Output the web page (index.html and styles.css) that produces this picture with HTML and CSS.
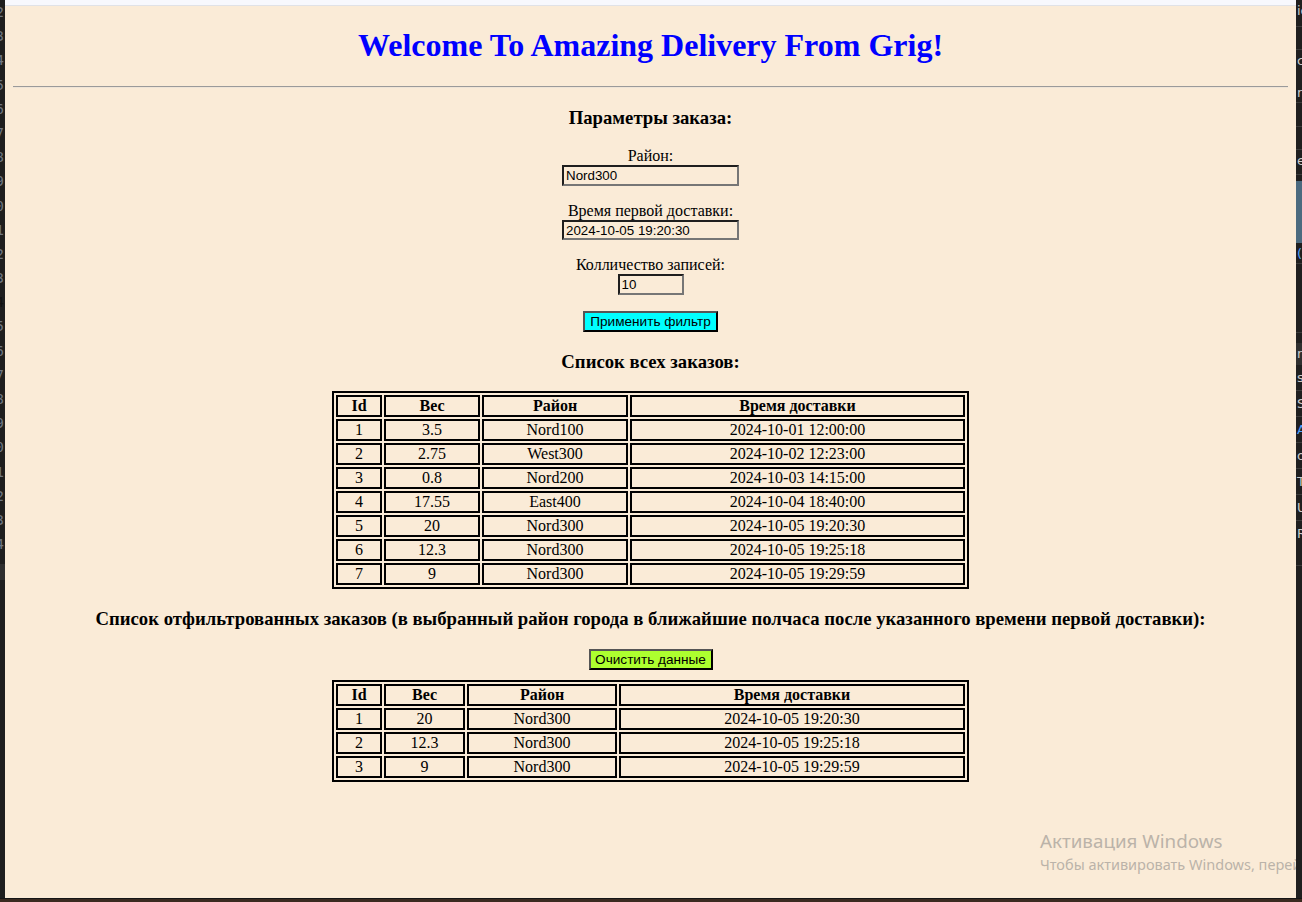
FILE: index.html
```html
<!DOCTYPE html>
<html lang="ru">
<head>
<meta charset="utf-8">
<title>Amazing Delivery</title>
<link rel="stylesheet" href="styles.css">
</head>
<body>
<div class="screen">
  <div class="gutter-left">
    <div class="ln">12</div><div class="ln">13</div><div class="ln">14</div><div class="ln">15</div>
    <div class="ln">16</div><div class="ln">17</div><div class="ln">18</div><div class="ln">19</div>
    <div class="ln">20</div><div class="ln">21</div><div class="ln">22</div><div class="ln">23</div>
    <div class="ln ln-current">24</div><div class="ln">25</div><div class="ln">26</div><div class="ln">27</div>
    <div class="ln">28</div><div class="ln">29</div><div class="ln">30</div><div class="ln">31</div>
    <div class="ln">32</div><div class="ln">33</div><div class="ln">34</div>
    <div class="gutter-bar"></div>
  </div>

  <div class="window">
    <div class="topbar"></div>
    <div class="viewport">
      <div class="page">
        <h1 class="title">Welcome To Amazing Delivery From Grig!</h1>
        <hr class="rule">
        <h3 class="section">Параметры заказа:</h3>
        <form class="filters">
          <div class="field">
            <label class="field-label" for="district">Район:</label>
            <input class="input input-wide" id="district" type="text" value="Nord300">
          </div>
          <div class="field">
            <label class="field-label" for="first-time">Время первой доставки:</label>
            <input class="input input-wide" id="first-time" type="text" value="2024-10-05 19:20:30">
          </div>
          <div class="field">
            <label class="field-label" for="count">Колличество записей:</label>
            <input class="input input-short" id="count" type="text" value="10">
          </div>
          <button class="btn btn-apply" type="button">Применить фильтр</button>
        </form>

        <h3 class="section">Список всех заказов:</h3>
        <table class="orders">
          <thead>
            <tr><th class="c-id">Id</th><th class="c-w1">Вес</th><th class="c-d1">Район</th><th class="c-t1">Время доставки</th></tr>
          </thead>
          <tbody>
            <tr><td>1</td><td>3.5</td><td>Nord100</td><td>2024-10-01 12:00:00</td></tr>
            <tr><td>2</td><td>2.75</td><td>West300</td><td>2024-10-02 12:23:00</td></tr>
            <tr><td>3</td><td>0.8</td><td>Nord200</td><td>2024-10-03 14:15:00</td></tr>
            <tr><td>4</td><td>17.55</td><td>East400</td><td>2024-10-04 18:40:00</td></tr>
            <tr><td>5</td><td>20</td><td>Nord300</td><td>2024-10-05 19:20:30</td></tr>
            <tr><td>6</td><td>12.3</td><td>Nord300</td><td>2024-10-05 19:25:18</td></tr>
            <tr><td>7</td><td>9</td><td>Nord300</td><td>2024-10-05 19:29:59</td></tr>
          </tbody>
        </table>

        <h3 class="section">Список отфильтрованных заказов (в выбранный район города в ближайшие полчаса после указанного времени первой доставки):</h3>
        <button class="btn btn-clear" type="button">Очистить данные</button>
        <table class="orders">
          <thead>
            <tr><th class="c-id">Id</th><th class="c-w2">Вес</th><th class="c-d2">Район</th><th class="c-t2">Время доставки</th></tr>
          </thead>
          <tbody>
            <tr><td>1</td><td>20</td><td>Nord300</td><td>2024-10-05 19:20:30</td></tr>
            <tr><td>2</td><td>12.3</td><td>Nord300</td><td>2024-10-05 19:25:18</td></tr>
            <tr><td>3</td><td>9</td><td>Nord300</td><td>2024-10-05 19:29:59</td></tr>
          </tbody>
        </table>
      </div>

      <div class="watermark">
        <div class="wm-title">Активация Windows</div>
        <div class="wm-sub">Чтобы активировать Windows, перейдите в раздел «Параметры».</div>
      </div>
    </div>
  </div>

  <div class="gutter-right">
    <div class="pr pr-27">ic</div>
    <div class="pr pr-23"></div>
    <div class="pr pr-53"><span class="pr-line">c</span><span class="pr-line pr-gap">nt</span></div>
    <div class="pr pr-24"></div>
    <div class="pr pr-23"></div>
    <div class="pr pr-25">e</div>
    <div class="pr-blue"></div>
    <div class="pr pr-21 pr-link">(</div>
    <div class="pr pr-69"></div>
    <div class="pr-grey">n</div>
    <div class="pr pr-26">s</div>
    <div class="pr pr-26">SH</div>
    <div class="pr pr-26 pr-link">A</div>
    <div class="pr pr-26">or</div>
    <div class="pr pr-26">Ta</div>
    <div class="pr pr-26">Us</div>
    <div class="pr pr-45">Re</div>
  </div>

  <div class="bottombar"></div>
</div>
</body>
</html>
```

FILE: styles.css
```css
html, body {
  margin: 0;
  padding: 0;
  background: #1e1e1e;
}

.screen {
  display: grid;
  grid-template-columns: 5px 1291px 6px;
  grid-template-rows: 898px 4px;
  width: 1302px;
  height: 902px;
  overflow: hidden;
}

/* left editor gutter with line numbers (mostly hidden) */
.gutter-left {
  background: #1e1e1e;
  overflow: hidden;
  font-family: "DejaVu Sans Mono", monospace;
  font-size: 14px;
  line-height: 24.2px;
  color: #6e7681;
}
.ln {
  display: flex;
  justify-content: flex-end;
  height: 24.2px;
  padding-right: 1px;
  white-space: nowrap;
}
.ln-current { color: #111; }
.gutter-bar {
  height: 16px;
  margin-top: 8px;
  background: #2e2e2e;
}

/* browser window */
.window {
  display: flex;
  flex-direction: column;
  min-width: 0;
}
.topbar {
  flex: none;
  height: 6px;
  box-sizing: border-box;
  background: #f7f8fd;
  border-bottom: 1px solid #e0e2e7;
}
.viewport {
  flex: 1;
  position: relative;
  overflow: hidden;
  background: #faebd7;
}

.page {
  display: flow-root;
  padding: 0 8px;
  text-align: center;
  font-family: "Liberation Serif", "Times New Roman", serif;
  font-size: 16px;
  color: #000;
}

.title {
  margin: 21.44px 0;
  font-size: 32px;
  font-weight: bold;
  color: #0000ff;
}

.rule {
  margin: 8px 0;
  height: 0;
  border: 0;
  border-top: 1px solid #9a9a9a;
  border-bottom: 1px solid #efe4d6;
}

.section {
  margin: 18.72px 0;
  font-size: 18.72px;
  font-weight: bold;
}

.filters { margin: 0; }

.field { margin: 16px 0; }

.field-label { display: block; }

.input {
  display: block;
  margin: 0 auto;
  height: 20.5px;
  box-sizing: border-box;
  padding: 0 2px;
  border: 2px solid;
  border-color: #1e1e1e #767676 #767676 #1e1e1e;
  background: transparent;
  color: #000;
  font-family: "Liberation Sans", Arial, sans-serif;
  font-size: 13.33px;
}
.input-wide { width: 177px; }
.input-short { width: 66px; }

.btn {
  display: block;
  height: 21px;
  box-sizing: border-box;
  padding: 0;
  border: 2px solid;
  border-color: #555 #000 #000 #555;
  color: #000;
  text-align: center;
  white-space: nowrap;
  font-family: "Liberation Sans", Arial, sans-serif;
  font-size: 13.6px;
}
.btn-apply {
  width: 135px;
  margin: 16px auto 0;
  background: #00ffff;
}
.btn-clear {
  width: 124px;
  margin: 0 auto 10.5px;
  background: #adff2f;
}

.orders {
  margin: 0 auto;
  width: 637px;
  table-layout: fixed;
  border-collapse: separate;
  border-spacing: 2px;
  border: 2px solid #000;
  font-size: 16px;
}
.orders th,
.orders td {
  box-sizing: border-box;
  padding: 0;
  border: 2px solid #000;
  line-height: 18px;
  text-align: center;
}
.orders th { font-weight: bold; }

.c-id { width: 46px; }
.c-w1 { width: 96px; }
.c-d1 { width: 146px; }
.c-t1 { width: 335px; }
.c-w2 { width: 81px; }
.c-d2 { width: 150px; }
.c-t2 { width: 346px; }

/* Windows activation watermark overlay */
.watermark {
  position: absolute;
  left: 1035px;
  top: 823px;
  text-align: left;
  white-space: nowrap;
  color: #bbb3a9;
  font-family: "Noto Sans", sans-serif;
}
.wm-title { font-size: 18.8px; line-height: 24px; }
.wm-sub { font-size: 14.5px; line-height: 22px; }

/* right side panel fragment */
.gutter-right {
  display: flex;
  flex-direction: column;
  overflow: hidden;
  background: #1f1f1f;
  font-family: "DejaVu Sans", sans-serif;
  font-size: 13px;
  color: #cccccc;
  white-space: nowrap;
}
.pr {
  flex: none;
  box-sizing: border-box;
  padding-left: 1px;
  border-bottom: 1px solid #3b3b3b;
  line-height: 22px;
  overflow: hidden;
}
.pr-line { display: block; }
.pr-gap { margin-top: 10px; }
.pr-21 { height: 21px; }
.pr-23 { height: 23px; }
.pr-24 { height: 24px; }
.pr-25 { height: 25px; }
.pr-26 { height: 26px; line-height: 26px; }
.pr-27 { height: 27px; }
.pr-45 { height: 45px; line-height: 26px; }
.pr-53 { height: 53px; }
.pr-69 { height: 69px; }
.pr-link { color: #4fa3ff; }
.pr-blue {
  flex: none;
  height: 62px;
  margin-top: 6px;
  background: #4b6a7f;
}
.pr-grey {
  flex: none;
  height: 22px;
  margin-top: 10px;
  padding-left: 1px;
  background: #2f2f2f;
  line-height: 22px;
}

.bottombar {
  grid-column: 1 / -1;
  background: #3a2a20;
  border-top: 1px solid #151515;
}
```
